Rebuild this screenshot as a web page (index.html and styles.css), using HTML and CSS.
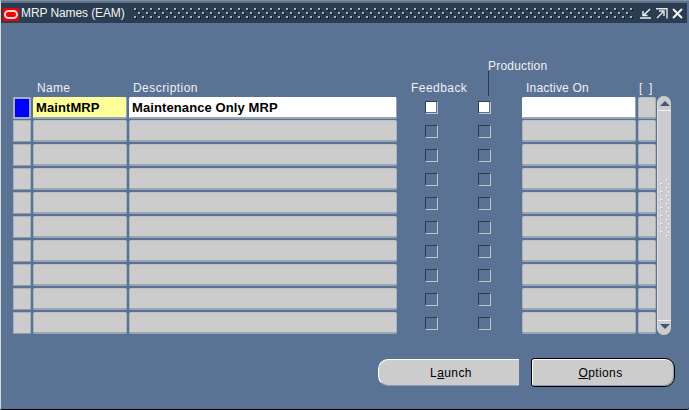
FILE: index.html
```html
<!DOCTYPE html>
<html lang="en">
<head>
<meta charset="utf-8">
<title>MRP Names (EAM)</title>
<link rel="stylesheet" href="styles.css">
</head>
<body>
<div class="window">
  <header class="titlebar">
    <svg class="logo" width="16" height="13" viewBox="0 0 16 13"><rect width="16" height="13" fill="#f00000"/><rect x="2" y="3" width="12" height="7" rx="3.500" fill="none" stroke="#ffd8d8" stroke-width="2"/></svg>
    <span class="title">MRP Names (EAM)</span>
    <svg class="grip" height="12" aria-hidden="true">
      <defs>
        <pattern id="dots" width="8" height="8" patternUnits="userSpaceOnUse">
          <rect x="1" y="1" width="2" height="2" fill="#0f1a26"/>
          <rect x="0" y="0" width="2" height="2" fill="#a8b4c0"/>
          <rect x="5" y="5" width="2" height="2" fill="#0f1a26"/>
          <rect x="4" y="4" width="2" height="2" fill="#a8b4c0"/>
        </pattern>
      </defs>
      <rect width="100%" height="12" fill="url(#dots)"/>
    </svg>
    <div class="winbtns">
      <svg width="12" height="11" viewBox="0 0 12 11"><path d="M0 10H11M10 1L4 7M3 3V7.500H7.500" fill="none" stroke="#f0f0f0" stroke-width="1.500"/></svg>
      <svg width="12" height="11" viewBox="0 0 12 11"><path d="M0 .700H11V10.500M1 10L7 4M3 3H8V8" fill="none" stroke="#e8e8e8" stroke-width="1.400"/></svg>
      <svg width="11" height="11" viewBox="0 0 11 11"><path d="M1 1L10 10M10 1L1 10" fill="none" stroke="#f4f4f4" stroke-width="2"/></svg>
    </div>
  </header>
  <main class="content">
    <div class="table-area">
      <div class="table">
        <div class="heads">
          <span class="selhead"></span>
          <span class="h-name">Name</span>
          <span class="h-desc">Description</span>
          <span class="h-feed">Feedback</span>
          <span class="h-prod"><span class="prod-label">Production</span></span>
          <span class="h-inactive">Inactive On</span>
          <span class="h-extra">[ ]</span>
        </div>
        <div class="row current">
          <div class="sel active"></div>
          <div class="field name required">MaintMRP</div>
          <div class="field desc live">Maintenance Only MRP</div>
          <div class="check-cell"><span class="check live"></span></div>
          <div class="check-cell"><span class="check live"></span></div>
          <div class="field inactive live"></div>
          <div class="field extra"></div>
        </div>
        <div class="row"><div class="sel"></div><div class="field name"></div><div class="field desc"></div><div class="check-cell"><span class="check"></span></div><div class="check-cell"><span class="check"></span></div><div class="field inactive"></div><div class="field extra"></div></div>
        <div class="row"><div class="sel"></div><div class="field name"></div><div class="field desc"></div><div class="check-cell"><span class="check"></span></div><div class="check-cell"><span class="check"></span></div><div class="field inactive"></div><div class="field extra"></div></div>
        <div class="row"><div class="sel"></div><div class="field name"></div><div class="field desc"></div><div class="check-cell"><span class="check"></span></div><div class="check-cell"><span class="check"></span></div><div class="field inactive"></div><div class="field extra"></div></div>
        <div class="row"><div class="sel"></div><div class="field name"></div><div class="field desc"></div><div class="check-cell"><span class="check"></span></div><div class="check-cell"><span class="check"></span></div><div class="field inactive"></div><div class="field extra"></div></div>
        <div class="row"><div class="sel"></div><div class="field name"></div><div class="field desc"></div><div class="check-cell"><span class="check"></span></div><div class="check-cell"><span class="check"></span></div><div class="field inactive"></div><div class="field extra"></div></div>
        <div class="row"><div class="sel"></div><div class="field name"></div><div class="field desc"></div><div class="check-cell"><span class="check"></span></div><div class="check-cell"><span class="check"></span></div><div class="field inactive"></div><div class="field extra"></div></div>
        <div class="row"><div class="sel"></div><div class="field name"></div><div class="field desc"></div><div class="check-cell"><span class="check"></span></div><div class="check-cell"><span class="check"></span></div><div class="field inactive"></div><div class="field extra"></div></div>
        <div class="row"><div class="sel"></div><div class="field name"></div><div class="field desc"></div><div class="check-cell"><span class="check"></span></div><div class="check-cell"><span class="check"></span></div><div class="field inactive"></div><div class="field extra"></div></div>
        <div class="row"><div class="sel"></div><div class="field name"></div><div class="field desc"></div><div class="check-cell"><span class="check"></span></div><div class="check-cell"><span class="check"></span></div><div class="field inactive"></div><div class="field extra"></div></div>
      </div>
      <div class="scrollbar">
        <div class="arrow up"><svg width="10" height="6" viewBox="0 0 10 6"><path d="M5 0L10 5H0Z" fill="#3e5878"/></svg></div>
        <div class="track">
          <svg class="dots" width="9" height="60" aria-hidden="true">
            <defs>
              <pattern id="thumb" width="8" height="8" patternUnits="userSpaceOnUse">
                <rect x="6" y="0" width="2" height="2" fill="#f4f4f4"/>
                <rect x="7" y="1" width="1" height="1" fill="#8d9cae"/>
                <rect x="0" y="4" width="2" height="2" fill="#f4f4f4"/>
                <rect x="1" y="5" width="1" height="1" fill="#8d9cae"/>
              </pattern>
            </defs>
            <rect width="9" height="60" fill="url(#thumb)"/>
          </svg>
        </div>
        <div class="arrow down"><svg width="10" height="6" viewBox="0 0 10 6"><path d="M0 0H10L5 5Z" fill="#3e5878"/></svg></div>
      </div>
    </div>
    <div class="actions">
      <button class="btn launch">L<u>a</u>unch</button>
      <button class="btn options"><u>O</u>ptions</button>
    </div>
  </main>
</div>
</body>
</html>
```
FILE: styles.css
```css
* { box-sizing: border-box; }
html, body { margin: 0; padding: 0; }
body {
  width: 689px;
  height: 410px;
  overflow: hidden;
  background: #5a7294;
  font-family: "Liberation Sans", Arial, sans-serif;
  font-size: 12px;
}
.window {
  width: 689px;
  height: 410px;
  display: flex;
  flex-direction: column;
  background: #5a7294;
  border-top: 1px solid #8c8c8c;
  border-left: 1px solid #d8d8d8;
  border-bottom: 1px solid #000;
  border-radius: 0 0 3px 3px;
}
.titlebar {
  height: 20px;
  margin-top: 2px;
  margin-right: 2px;
  display: flex;
  align-items: center;
  background: #2b3d50;
  color: #fff;
  flex: none;
}
.logo { margin: 2px 2px 0 2px; flex: none; }
.title { font-size: 12px; letter-spacing: -0.1px; white-space: nowrap; color: #f4f4f4; }
.grip {
  flex: 1;
  min-width: 0;
  margin: 1px 6px 0 9px;
}
.winbtns { display: flex; gap: 4px; padding-right: 4px; align-items: center; flex: none; }
.winbtns svg { display: block; }
.content {
  flex: 1;
  display: flex;
  flex-direction: column;
  padding: 56px 17px 0 12px;
}
.table-area { display: flex; align-items: flex-end; }
.table { width: 643px; flex: none; }
.heads, .row {
  display: grid;
  grid-template-columns: 20px 96px 270px 79px 44px 116px 18px;
}
.heads {
  height: 18px;
  color: #f0f0f0;
  align-items: end;
  letter-spacing: 0.2px;
}
.heads > span { padding-bottom: 2px; line-height: 14px; white-space: nowrap; }
.h-name { padding-left: 4px; letter-spacing: 0.3px; }
.h-desc { padding-left: 4px; letter-spacing: 0.45px; }
.h-feed { padding-left: 12px; letter-spacing: 0.45px; }
.h-prod { position: relative; height: 18px; }
.prod-label { position: absolute; left: 10px; top: -20px; letter-spacing: 0.2px; }
.h-prod::before {
  content: "";
  position: absolute;
  left: 10px;
  top: -8px;
  width: 1px;
  height: 25px;
  background: #2b3d50;
}
.h-inactive { padding-left: 4px; }
.h-extra { padding-left: 1px; word-spacing: 3px; }
.row {
  height: 22px;
  margin-bottom: 2px;
}
.row.current { margin-bottom: 1px; }
.row:last-child { margin-bottom: 0; }
.sel {
  width: 18px;
  height: 22px;
  background: #cccccc;
  border: 1px solid #a5b1c0;
  border-bottom-color: #8d9cae;
  border-radius: 1px;
}
.sel.active { background: #0000ff; border: 2px solid #a5b1c0; }
.field {
  height: 22px;
  background: #cccccc;
  border: 1px solid #a8b4c2;
  border-top-color: #b9c2cd;
  border-bottom: 2px solid #99a6b6;
  border-radius: 2px;
  padding: 0 2px;
  font: bold 13px/20px "Liberation Sans", Arial, sans-serif;
  letter-spacing: 0.1px;
  color: #000;
  white-space: nowrap;
}
.row .name { width: 94px; }
.row .desc { width: 268px; }
.row .inactive { width: 114px; }
.row .extra { width: 18px; }
.field.live { background: #fff; border-color: #fff #99a6b6 #99a6b6 #fff; }
.field.required { background: #ffff99; border-color: #ffff99 #99a6b6 #99a6b6 #ffff99; }
.check-cell { display: flex; align-items: flex-start; padding-top: 5px; }
.current .check-cell { padding-top: 4px; }
.row .check-cell:nth-child(4) { padding-left: 26px; }
.check {
  display: block;
  width: 13px;
  height: 13px;
  border-style: solid;
  border-width: 1px;
  border-color: #2b3d50 #c4c4c4 #c4c4c4 #2b3d50;
}
.check.live {
  padding: 0 1px 1px 0;
  background: #fff content-box;
}
.scrollbar {
  width: 14px;
  height: 239px;
  margin-left: 1px;
  margin-bottom: -1px;
  background: #cccccc;
  border-left: 1px solid #dcdcdc;
  display: flex;
  flex-direction: column;
  border-radius: 7px;
  flex: none;
}
.arrow {
  height: 15px;
  display: flex;
  align-items: center;
  justify-content: center;
  flex: none;
}
.arrow.up { border-bottom: 1px solid #f4f4f4; padding-top: 2px; }
.arrow.down { border-top: 1px solid #f4f4f4; padding-bottom: 2px; }
.track { flex: 1; position: relative; }
.dots {
  position: absolute;
  left: 2px;
  top: 68px;
}
.actions {
  display: flex;
  padding-left: 365px;
  margin-top: 25px;
  gap: 12px;
}
.btn {
  flex: none;
  width: 141px;
  height: 27px;
  font: 12px "Liberation Sans", Arial, sans-serif;
  letter-spacing: 0.4px;
  color: #000;
  background: #cccccc;
  padding: 0;
}
.btn.launch {
  padding-left: 4px;
  border: 0;
  border-left: 1px solid #fff;
  border-top: 1px solid #fff;
  border-bottom: 1px solid #8d9cae;
  border-radius: 10px 0 0 10px;
}
.btn.options {
  width: 144px;
  height: 29px;
  margin-top: -1px;
  padding-right: 5px;
  border: 1px solid #000;
  box-shadow: inset 1px 1px 0 #fff, inset -1px -1px 0 #8d9cae;
  border-radius: 3px 10px 10px 3px;
}
```
